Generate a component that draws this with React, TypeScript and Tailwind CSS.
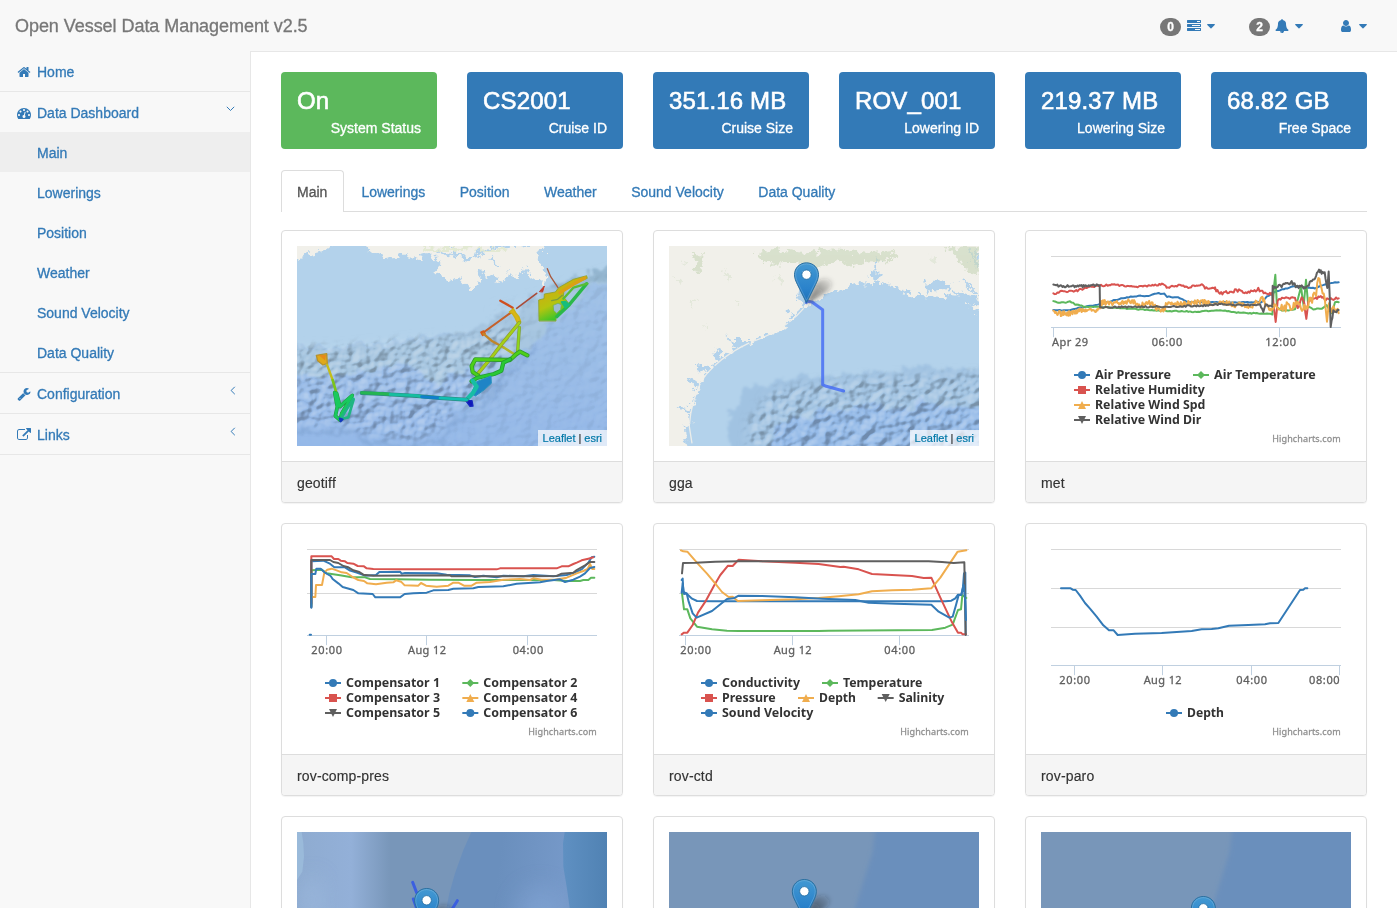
import React from "react";

const BLUE = "#337ab7";
const GREEN = "#5cb85c";
const RED = "#d9534f";
const ORANGE = "#f0ad4e";
const GREY = "#5f5f5f";

/* ---------- icons ---------- */

const ICONS = {
  home: "M1472 992v480q0 26-19 45t-45 19h-384v-384h-256v384h-384q-26 0-45-19t-19-45v-480q0-1 .5-3t.5-3l575-474 575 474q1 2 1 6zm223-69l-62 74q-8 9-21 11h-3q-13 0-21-7l-692-577-692 577q-12 8-24 7-13-2-21-11l-62-74q-8-10-7-23.5t11-21.5l719-599q32-26 76-26t76 26l244 204v-195q0-14 9-23t23-9h192q14 0 23 9t9 23v408l219 182q10 8 11 21.5t-7 23.5z",
  dashboard:
    "M384 1152q0-53-37.5-90.5t-90.5-37.5-90.5 37.5-37.5 90.5 37.5 90.5 90.5 37.5 90.5-37.5 37.5-90.5zm192-448q0-53-37.5-90.5t-90.5-37.5-90.5 37.5-37.5 90.5 37.5 90.5 90.5 37.5 90.5-37.5 37.5-90.5zm428 481l101-382q6-26-7.5-48.5t-38.5-29.5-48 6.5-30 39.5l-101 382q-60 5-107 43.5t-63 98.5q-20 77 20 146t117 89 146-20 89-117q16-60-6-117t-72-91zm660-33q0-53-37.5-90.5t-90.5-37.5-90.5 37.5-37.5 90.5 37.5 90.5 90.5 37.5 90.5-37.5 37.5-90.5zm-640-640q0-53-37.5-90.5t-90.5-37.5-90.5 37.5-37.5 90.5 37.5 90.5 90.5 37.5 90.5-37.5 37.5-90.5zm448 192q0-53-37.5-90.5t-90.5-37.5-90.5 37.5-37.5 90.5 37.5 90.5 90.5 37.5 90.5-37.5 37.5-90.5zm320 448q0 261-141 483-19 29-54 29h-1402q-35 0-54-29-141-221-141-483 0-182 71-348t191-286 286-191 348-71 348 71 286 191 191 286 71 348z",
  wrench:
    "M448 1472q0-26-19-45t-45-19-45 19-19 45 19 45 45 19 45-19 19-45zm644-420l-682 682q-37 37-90 37-52 0-91-37l-106-108q-38-36-38-90 0-53 38-91l681-681q39 98 114.5 173.5t173.5 114.5zm634-435q0 39-23 106-47 134-164.5 217.5t-258.5 83.5q-185 0-316.5-131.5t-131.5-316.5 131.5-316.5 316.5-131.5q58 0 121.5 16.5t107.5 46.5q16 11 16 28t-16 28l-293 169v224l193 107q5-3 79-48.5t135.5-81 70.5-35.5q15 0 23.5 10t8.5 25z",
  external:
    "M1408 928v320q0 119-84.5 203.5t-203.5 84.5h-832q-119 0-203.5-84.5t-84.5-203.5v-832q0-119 84.5-203.5t203.5-84.5h704q14 0 23 9t9 23v64q0 14-9 23t-23 9h-704q-66 0-113 47t-47 113v832q0 66 47 113t113 47h832q66 0 113-47t47-113v-320q0-14 9-23t23-9h64q14 0 23 9t9 23zm384-864v512q0 26-19 45t-45 19-45-19l-176-176-652 652q-10 10-23 10t-23-10l-114-114q-10-10-10-23t10-23l652-652-176-176q-19-19-19-45t19-45 45-19h512q26 0 45 19t19 45z",
  tasks:
    "M1024 1408h640v-128h-640v128zm-384-512h1024v-128h-1024v128zm640-512h384v-128h-384v128zm512 832v256q0 26-19 45t-45 19h-1664q-26 0-45-19t-19-45v-256q0-26 19-45t45-19h1664q26 0 45 19t19 45zm0-512v256q0 26-19 45t-45 19h-1664q-26 0-45-19t-19-45v-256q0-26 19-45t45-19h1664q26 0 45 19t19 45zm0-512v256q0 26-19 45t-45 19h-1664q-26 0-45-19t-19-45v-256q0-26 19-45t45-19h1664q26 0 45 19t19 45z",
  bell: "M912 1696q0-16-16-16-59 0-101.5-42.5t-42.5-101.5q0-16-16-16t-16 16q0 73 51.5 124.5t124.5 51.5q16 0 16-16zm816-288q0 52-38 90t-90 38h-448q0 106-75 181t-181 75-181-75-75-181h-448q-52 0-90-38t-38-90q50-42 91-88t85-119.5 74.5-158.5 50-206 19.5-260q0-152 117-282.5t307-158.5q-8-19-8-39 0-40 28-68t68-28 68 28 28 68q0 20-8 39 190 28 307 158.5t117 282.5q0 139 19.5 260t50 206 74.5 158.5 85 119.5 91 88z",
  user: "M1536 1399q0 109-62.5 187t-150.5 78h-854q-88 0-150.5-78t-62.5-187q0-85 8.5-160.5t31.5-152 58.5-131 94-89 134.5-34.5q131 128 313 128t313-128q76 0 134.5 34.5t94 89 58.5 131 31.5 152 8.5 160.5zm-256-887q0 159-112.5 271.5t-271.5 112.5-271.5-112.5-112.5-271.5 112.5-271.5 271.5-112.5 271.5 112.5 112.5 271.5z",
};

function Icon({ name, className = "" }: { name: keyof typeof ICONS; className?: string }) {
  return (
    <svg viewBox="0 0 1792 1792" className={`h-[14px] w-[14px] shrink-0 fill-current ${className}`}>
      <path d={ICONS[name]} />
    </svg>
  );
}

function Caret() {
  return (
    <svg viewBox="0 0 8 5" className="h-[5px] w-2 shrink-0 fill-current">
      <path d="M.5 0h7q.6.3.2.9L4.4 4.3q-.4.4-.8 0L.3.9Q-.1.3.5 0z" />
    </svg>
  );
}

/* ---------- chart helpers ---------- */

type Pt = [number, number];

function jitter(points: Pt[], amp: number, seed: number, step = 4) {
  let s = seed;
  const rnd = () => {
    s = (s * 16807) % 2147483647;
    return s / 2147483647 - 0.5;
  };
  const out: string[] = [];
  for (let i = 0; i < points.length - 1; i++) {
    const [x0, y0] = points[i];
    const [x1, y1] = points[i + 1];
    const n = Math.max(1, Math.round((x1 - x0) / step));
    for (let k = 0; k < n; k++) {
      const t = k / n;
      const x = x0 + (x1 - x0) * t;
      const y = y0 + (y1 - y0) * t + rnd() * amp * 2;
      out.push(`${x.toFixed(1)},${y.toFixed(1)}`);
    }
  }
  const last = points[points.length - 1];
  out.push(`${last[0]},${last[1]}`);
  return out.join(" ");
}

type Shape = "circle" | "diamond" | "square" | "up" | "down";
type Legend = { x: number; y: number; label: string; w: number; color: string; shape: Shape };
type Axis = { x: number; label: string; w: number; lx: number };

function Marker({ x, y, color, shape }: { x: number; y: number; color: string; shape: Shape }) {
  return (
    <g fill={color} stroke="none">
      <rect x={x - 24} y={y - 3} width={48} height={6} />
      {shape === "circle" && <circle cx={x} cy={y} r={12} />}
      {shape === "diamond" && <path d={`M${x} ${y - 12}l12 12-12 12-12-12z`} />}
      {shape === "square" && <rect x={x - 12} y={y - 12} width={24} height={24} />}
      {shape === "up" && <path d={`M${x} ${y - 12}l12 24h-24z`} />}
      {shape === "down" && <path d={`M${x} ${y + 12}l12-24h-24z`} />}
    </g>
  );
}

function Chart({
  viewBox,
  x0,
  grid,
  axisY,
  axis,
  legend,
  creditY,
  children,
}: {
  viewBox: string;
  x0: number;
  grid: number[];
  axisY: number;
  axis: Axis[];
  legend: Legend[];
  creditY: number;
  children: React.ReactNode;
}) {
  return (
    <svg viewBox={viewBox} className="block h-[200px] w-[310px] font-['Noto_Sans',sans-serif]">
      {grid.map((y) => (
        <rect key={y} x={x0} y={y - 1.5} width={870} height={3} fill="#d8d8d8" />
      ))}
      <rect x={x0} y={axisY - 1.5} width={870} height={3} fill="#c0d0e0" />
      {axis.map((a) => (
        <g key={a.label}>
          <rect x={a.x - 1.5} y={axisY} width={3} height={29} fill="#c0d0e0" />
          <text x={a.lx} y={axisY + 56} textLength={a.w} fontSize={33} fill="#606060" stroke="#606060" strokeWidth={0.9}>
            {a.label}
          </text>
        </g>
      ))}
      <g fill="none" strokeWidth={6} strokeLinejoin="round" strokeLinecap="round">
        {children}
      </g>
      {legend.map((l) => (
        <g key={l.label}>
          <Marker x={l.x} y={l.y} color={l.color} shape={l.shape} />
          <text
            x={l.x + 39}
            y={l.y + 12}
            textLength={l.w + 1}
            lengthAdjust="spacingAndGlyphs"
            fontSize={36.5}
            fontWeight={700}
            fill="#333"
          >
            {l.label}
          </text>
        </g>
      ))}
      <text x={x0 + 664} y={creditY} textLength={205} fontSize={27} fill="#909090" stroke="#909090" strokeWidth={0.9}>
        Highcharts.com
      </text>
    </svg>
  );
}

function MetChart() {
  return (
    <Chart
      viewBox="18 18 930 600"
      x0={48}
      grid={[49.5]}
      axisY={262.5}
      creditY={605}
      axis={[
        { x: 55.5, label: "Apr 29", w: 108, lx: 51 },
        { x: 394.5, label: "06:00", w: 92, lx: 350 },
        { x: 733.5, label: "12:00", w: 92, lx: 691 },
      ]}
      legend={[
        { x: 141, y: 405, label: "Air Pressure", w: 227, color: BLUE, shape: "circle" },
        { x: 498, y: 405, label: "Air Temperature", w: 304, color: GREEN, shape: "diamond" },
        { x: 141, y: 450, label: "Relative Humidity", w: 328, color: RED, shape: "square" },
        { x: 141, y: 495, label: "Relative Wind Spd", w: 330, color: ORANGE, shape: "up" },
        { x: 141, y: 540, label: "Relative Wind Dir", w: 318, color: GREY, shape: "down" },
      ]}
    >
      <polyline
        stroke={BLUE}
        points={jitter([[55, 211], [105, 211], [130, 204], [165, 198], [200, 192], [230, 183], [270, 173], [305, 168], [340, 167], [365, 160], [388, 161], [396, 170], [430, 172], [460, 186], [520, 187], [600, 187], [680, 186], [695, 170], [712, 160], [735, 150], [775, 140], [815, 142], [840, 145], [870, 133], [895, 128], [911, 127]], 1.3, 11, 6)}
      />
      <polyline
        stroke={GREEN}
        points={jitter([[55, 185], [75, 189], [95, 187], [105, 183], [120, 193], [150, 200], [240, 203], [330, 209], [400, 213], [480, 215], [560, 211], [600, 217], [680, 221], [712, 222], [717, 140], [721, 104], [726, 200], [740, 212], [780, 208], [798, 140], [806, 200], [813, 118], [820, 200], [835, 207], [860, 205], [875, 195], [890, 220], [900, 187], [911, 187]], 1.6, 23, 5)}
      />
      <polyline
        stroke={RED}
        points={jitter([[55, 163], [80, 154], [120, 154], [150, 144], [190, 137], [230, 134], [300, 140], [385, 133], [395, 142], [430, 136], [460, 142], [500, 133], [510, 144], [540, 147]], 3, 5, 4)}
      />
      <polyline
        stroke={RED}
        points={jitter([[540, 147], [562, 161], [600, 152], [640, 156], [670, 148], [690, 158], [712, 162], [722, 250], [728, 182], [745, 175], [780, 170], [788, 205], [800, 175], [808, 190], [814, 240], [820, 180], [850, 172], [880, 177], [911, 175]], 5, 15, 4)}
      />
      <polyline
        stroke={ORANGE}
        points={jitter([[55, 220], [100, 221], [135, 211], [195, 211], [199, 188], [240, 189], [285, 182], [320, 196], [345, 188], [365, 205], [385, 212], [395, 192], [460, 190], [500, 186], [540, 194], [560, 184], [600, 194], [650, 197], [687, 175], [695, 200], [712, 205]], 8, 31, 2.5)}
      />
      <polyline
        stroke={ORANGE}
        points={jitter([[712, 207], [740, 201], [770, 199], [798, 200], [820, 190], [840, 170], [850, 125], [866, 155], [876, 240], [882, 190], [888, 215], [895, 200], [911, 220]], 15, 57, 3)}
      />
      <polyline
        stroke={GREY}
        points={jitter([[55, 137], [125, 139], [194, 136]], 3.5, 77, 3) + " 195,202 " + jitter([[196, 203], [300, 200], [400, 200], [500, 197], [560, 192], [620, 196], [675, 194], [685, 215], [692, 195], [712, 200]], 2.4, 79, 4)}
      />
      <polyline
        stroke={GREY}
        points={jitter([[712, 200], [713, 143], [740, 136], [770, 125], [785, 142], [815, 139], [840, 115], [852, 88], [860, 97], [869, 100], [877, 148], [881, 90], [887, 255], [895, 215], [911, 210]], 6, 99, 3)}
      />
    </Chart>
  );
}

function CompChart() {
  return (
    <Chart
      viewBox="21 27 930 600"
      x0={51}
      grid={[58.5, 190.5]}
      axisY={316.5}
      creditY={614}
      axis={[
        { x: 109.5, label: "20:00", w: 92, lx: 64 },
        { x: 409.5, label: "Aug 12", w: 114, lx: 354 },
        { x: 712.5, label: "04:00", w: 92, lx: 668 },
      ]}
      legend={[
        { x: 129, y: 459, label: "Compensator 1", w: 281, color: BLUE, shape: "circle" },
        { x: 541, y: 459, label: "Compensator 2", w: 281, color: GREEN, shape: "diamond" },
        { x: 129, y: 504, label: "Compensator 3", w: 281, color: RED, shape: "square" },
        { x: 541, y: 504, label: "Compensator 4", w: 281, color: ORANGE, shape: "up" },
        { x: 129, y: 549, label: "Compensator 5", w: 281, color: GREY, shape: "down" },
        { x: 541, y: 549, label: "Compensator 6", w: 281, color: BLUE, shape: "circle" },
      ]}
    >
      <path stroke={BLUE} d="M59 314h4" />
      <path
        stroke={BLUE}
        d="M64 230V94L100 92 118 100 133 112 165 112 180 122 200 128 225 137 258 135 268 126 290 126 330 125 335 131 345 129 440 130 470 134 540 136 555 141 580 137 620 142 640 137 700 139 730 135 790 139 830 135 855 127 875 118 895 98 905 82 913 80"
      />
      <path
        stroke={GREEN}
        d="M64 225V121L95 119 110 130 150 136 185 142 225 142 240 147 320 148 420 149 560 150 700 150 790 150 830 153 870 153 880 150 895 150 903 143 913 143"
      />
      <path
        stroke={RED}
        d="M64 220V79H125L132 87 145 87 152 92 165 94 172 99 190 101 203 108 222 109 230 115 250 117 330 118H620L630 115H800L815 109 835 109 850 102 862 97 875 91 895 86 910 82"
      />
      <path
        stroke={ORANGE}
        d="M66 201H76L78 165H96L103 128 112 119 125 116 140 121 155 127 170 129 188 141 205 150 222 153 232 160 258 163 290 158 310 157 318 151 333 155 344 166 385 167 393 159 408 167 440 170 475 167 490 158 505 158 522 167 545 167 560 158 600 156 640 149 690 147 720 150 730 145 755 149 795 149 830 143 860 130 880 123 893 117 900 102 907 117 913 117"
      />
      <path
        stroke={GREY}
        d="M64 232V90H120L130 96 145 99 160 108 175 112 190 121 208 126 220 134 250 137 480 136 485 139 640 139 720 139 800 138 815 131 850 128 860 120 885 106 900 96 913 96"
      />
      <path
        stroke={BLUE}
        d="M64 233V132H76L79 116H92L105 128 122 138 128 147 145 160 158 171 190 180 205 190 248 192 256 202H330L344 192 370 190 410 188 430 181 475 180 490 176 550 175 565 171 640 169 680 161 750 157 770 153 810 148 825 156 850 149 870 140 885 130 900 114 913 111"
      />
    </Chart>
  );
}

function CtdChart() {
  return (
    <Chart
      viewBox="21 27 930 600"
      x0={51}
      grid={[58.5, 190.5]}
      axisY={316.5}
      creditY={614}
      axis={[
        { x: 70.5, label: "20:00", w: 92, lx: 55 },
        { x: 391.5, label: "Aug 12", w: 114, lx: 335 },
        { x: 712.5, label: "04:00", w: 92, lx: 667 },
      ]}
      legend={[
        { x: 141, y: 459, label: "Conductivity", w: 233, color: BLUE, shape: "circle" },
        { x: 504, y: 459, label: "Temperature", w: 237, color: GREEN, shape: "diamond" },
        { x: 141, y: 504, label: "Pressure", w: 160, color: RED, shape: "square" },
        { x: 432, y: 504, label: "Depth", w: 110, color: ORANGE, shape: "up" },
        { x: 671, y: 504, label: "Salinity", w: 136, color: GREY, shape: "down" },
        { x: 141, y: 549, label: "Sound Velocity", w: 273, color: BLUE, shape: "circle" },
      ]}
    >
      <path
        stroke={BLUE}
        d="M59 150L62 146 64 185 75 192 90 206 105 213 150 214H850L868 212 880 205 888 194 898 194 903 170 906 130 910 128 911 312"
      />
      <path
        stroke={GREEN}
        d="M60 190L66 238 76 238 85 265 105 290 150 298 195 302 230 303H470L500 302 810 300 850 293 872 284 888 240 897 238 901 195 913 204"
      />
      <path
        stroke={RED}
        d="M59 313L66 308 76 308 92 285 108 248 130 215 156 167 175 135 198 107 212 108 230 89 300 94 400 98 470 102 535 111 545 110 590 118 630 132 690 135 750 138 785 144 808 143 835 203 870 277 888 308 897 308 902 313 912 313"
      />
      <path
        stroke={ORANGE}
        d="M57 61L64 64 76 65 110 104 135 131 160 161 180 186 200 201 212 200 227 213 300 211 400 208 470 204 530 199 590 193 630 184 690 181 750 179 808 175 835 143 865 98 887 65 900 63 913 61"
      />
      <path stroke={GREY} d="M60 130L63 99 100 98 160 95 230 94H800L840 96 875 99 907 97 911 315" />
      <path
        stroke={BLUE}
        d="M59 188L62 160 66 192 74 190 80 215 92 250 104 263 150 243 195 207 215 205 230 197 300 198 400 202 480 206 580 210 620 218 700 221 808 224 830 245 862 263 872 260 882 225 890 195 898 195 905 165 909 205 912 270"
      />
    </Chart>
  );
}

function ParoChart() {
  return (
    <Chart
      viewBox="18 27 930 600"
      x0={48}
      grid={[58.5, 175.5, 292.5]}
      axisY={406.5}
      creditY={614}
      axis={[
        { x: 118.5, label: "20:00", w: 92, lx: 73 },
        { x: 382.5, label: "Aug 12", w: 114, lx: 326 },
        { x: 649.5, label: "04:00", w: 92, lx: 604 },
        { x: 913.5, label: "08:00", w: 92, lx: 822 },
      ]}
      legend={[{ x: 417, y: 549, label: "Depth", w: 110, color: BLUE, shape: "circle" }]}
    >
      <path
        stroke={BLUE}
        d="M78 175H107L113 179 122 180 135 197 150 219 165 236 185 260 205 286 222 301H236L248 315 300 311 380 309 470 303 500 298 530 297 550 295 582 287 640 285 690 283 705 280 730 279 795 180 805 179 810 175 817 175"
      />
    </Chart>
  );
}

/* ---------- maps ---------- */

function Pin({ x, y, id }: { x: number; y: number; id: string }) {
  return (
    <g transform={`translate(${x} ${y}) scale(3)`}>
      <defs>
        <linearGradient id={`${id}-fill`} x1="0" y1="0" x2="0" y2="1">
          <stop offset="0" stopColor="#4399d2" />
          <stop offset="0.65" stopColor="#2a82cb" />
          <stop offset="1" stopColor="#1d6fb6" />
        </linearGradient>
        <linearGradient id={`${id}-shade`} x1="0" y1="1" x2="1" y2="0">
          <stop offset="0" stopColor="#222" stopOpacity="0.6" />
          <stop offset="0.5" stopColor="#222" stopOpacity="0.4" />
          <stop offset="1" stopColor="#222" stopOpacity="0.04" />
        </linearGradient>
        <filter id={`${id}-blur`} x="-50%" y="-50%" width="200%" height="200%">
          <feGaussianBlur stdDeviation="2" />
        </filter>
      </defs>
      <path d="M0 40L9 21Q15 14 24 17 29 22 21 29L2 41z" fill={`url(#${id}-shade)`} filter={`url(#${id}-blur)`} />
      <path
        d="M0 .5C-6.9.5-12 5.7-12 12.4-12 16-10.6 19-9 22.3L0 40.5 9 22.3C10.6 19 12 16 12 12.4 12 5.7 6.9.5 0 .5z"
        fill={`url(#${id}-fill)`}
        stroke="#2a6f9f"
        strokeWidth="1"
      />
      <path d="M0 1.6C-6.3 1.6-10.9 6.4-10.9 12.4-10.9 15.8-9.6 18.6-8 21.8L0 38 8 21.8C9.6 18.6 10.9 15.8 10.9 12.4 10.9 6.4 6.3 1.6 0 1.6z" fill="none" stroke="#fff" strokeOpacity="0.17" />
      <circle cy="12.3" r="4.7" fill="#fff" stroke="#2870a5" strokeWidth="0.9" />
    </g>
  );
}

function MapFilters({ id, seed }: { id: string; seed: number }) {
  return (
    <>
      <filter id={`${id}-relief`} x="0" y="0" width="100%" height="100%" colorInterpolationFilters="sRGB">
        <feTurbulence type="fractalNoise" baseFrequency="0.028 0.032" numOctaves={2} seed={seed} result="n" />
        <feColorMatrix in="n" type="matrix" values="0 0 0 0 0 0 0 0 0 0 0 0 0 0 0 1 0 0 0 0" />
        <feDiffuseLighting surfaceScale={13} diffuseConstant={1.12} lightingColor="#fff">
          <feDistantLight azimuth={225} elevation={30} />
        </feDiffuseLighting>
      </filter>
      <filter id={`${id}-coast`} x="-5%" y="-5%" width="110%" height="110%">
        <feTurbulence type="fractalNoise" baseFrequency="0.05" numOctaves={4} seed={seed + 2} result="n" />
        <feDisplacementMap in="SourceGraphic" in2="n" scale={42} xChannelSelector="R" yChannelSelector="G" />
      </filter>
      <filter id={`${id}-rough`} x="-5%" y="-5%" width="110%" height="110%">
        <feTurbulence type="fractalNoise" baseFrequency="0.03" numOctaves={3} seed={seed + 4} result="n" />
        <feDisplacementMap in="SourceGraphic" in2="n" scale={50} xChannelSelector="R" yChannelSelector="G" />
        <feGaussianBlur stdDeviation="3" />
      </filter>
      <filter id={`${id}-soft`} x="-20%" y="-20%" width="140%" height="140%">
        <feGaussianBlur stdDeviation="12" />
      </filter>
    </>
  );
}

function MapFrame({ credit = true, children }: { credit?: boolean; children: React.ReactNode }) {
  return (
    <div className="relative h-[200px] w-[310px] overflow-hidden">
      {children}
      {credit && (
        <div className="absolute right-0 bottom-0 flex h-4 items-center gap-[3px] bg-white/70 pr-[5px] pl-[5px] text-[11px] tracking-[-0.02px] text-[#333] [-webkit-text-stroke:0.2px]">
          <a className="text-[#0078a8]">Leaflet</a>
          <span>|</span>
          <a className="text-[#0078a8]">esri</a>
        </div>
      )}
    </div>
  );
}

function GeotiffMap() {
  return (
    <MapFrame>
      <svg viewBox="21 18 930 600" className="block h-[200px] w-[310px]">
        <defs>
          <MapFilters id="geo" seed={4} />
          <linearGradient id="geo-patch" x1="0.3" y1="0" x2="0.8" y2="1">
            <stop offset="0" stopColor="#dfa010" />
            <stop offset="0.5" stopColor="#b4c410" />
            <stop offset="0.8" stopColor="#35c52a" />
            <stop offset="1" stopColor="#14b97a" />
          </linearGradient>
          <mask id="geo-mask">
            <path
              d="M0 320L150 320 300 305 470 290 560 285 620 260 680 280 640 380 570 480 500 510 450 570 380 600 240 590 180 560 60 560 0 550z"
              fill="#fff"
              filter="url(#geo-soft)"
            />
            <path
              d="M620 260L600 200 650 180 760 160 840 120 980 80V640H240L460 600 560 490 640 380z"
              fill="#fff"
              opacity="0.18"
              filter="url(#geo-soft)"
            />
          </mask>
          <linearGradient id="geo-deep" x1="0" y1="0" x2="0" y2="1">
            <stop offset="0" stopColor="#9fc1e6" />
            <stop offset="1" stopColor="#93b7e8" />
          </linearGradient>
        </defs>
        <rect width="980" height="640" fill="#b3d2eb" />
        <path
          d="M-40 325L150 323 300 305 470 290 560 273 620 240 700 215 760 155 850 130 1020 85V680H-40z"
          fill="url(#geo-deep)"
          filter="url(#geo-rough)"
        />
        <path
          d="M-40 325L150 323 300 305 470 290 540 273 610 235 690 205 760 145 850 117 1020 70 1020 120 900 135 860 190 760 280 700 330 560 370 440 430 350 370 200 400 100 410 -40 400z"
          fill="#a5c5e0"
          filter="url(#geo-rough)"
        />
        <path
          d="M790 135L850 112 920 95 1020 60 1020 100 920 125 850 138 800 160z"
          fill="#8fb2cc"
          opacity="0.8"
          filter="url(#geo-rough)"
        />
        <path
          d="M-20 568L120 580 180 575 240 610 370 625 460 600 500 540 570 500 660 400 740 320"
          fill="none"
          stroke="#84a9d8"
          strokeWidth="12"
          opacity="0.7"
          filter="url(#geo-rough)"
        />
        <g mask="url(#geo-mask)" className="mix-blend-hard-light opacity-25">
          <rect x="0" y="0" width="980" height="640" filter="url(#geo-relief)" />
        </g>
        <path
          d="M0 -20H165L100 32 30 50 0 60zM200 -20H380L400 30 390 62 340 45 290 55 240 34zM380 -20H770L762 30 735 45 755 70 770 100 765 135 725 110 705 85 690 115 655 100 640 125 600 110 572 90 565 135 535 145 505 112 480 125 450 110 430 95 455 75 420 40 400 40z"
          fill="#f1f0ea"
          filter="url(#geo-coast)"
        />
        <path d="M440 30Q520 70 580 35T720 20M600 60l30 20M480 18l20 30 40 10" fill="none" stroke="#b3d2eb" strokeWidth="9" filter="url(#geo-coast)" />
        <path d="M400 18q60 20 150 0M560 30q40 10 90-4" fill="none" stroke="#e2e9d2" strokeWidth="10" filter="url(#geo-coast)" />

        <g fill="none" strokeLinecap="round" strokeLinejoin="round">
          <path d="M772 86L782 110 804 143" stroke="#a8583c" strokeWidth="4" />
          <path d="M740 160L680 205" stroke="#a84c3a" strokeWidth="5" />
          <path d="M749 154l14-16-5 17z" fill="#c03a2a" stroke="#c03a2a" strokeWidth="3" />
          <path d="M631 182L668 203" stroke="#cf4f20" strokeWidth="7" />
          <path d="M664 217L578 279" stroke="#c5602a" strokeWidth="6" />
          <path d="M573 277l8-4 4 8-7 5z" fill="#d75a18" stroke="#d75a18" strokeWidth="5" />
          <path d="M580 281L607 304 640 322" stroke="#c1862a" strokeWidth="7" />
          <path d="M640 322L672 342" stroke="#b3b428" strokeWidth="7" />
          <path d="M658 216l12-10 7 12 10 13 5 14-10 4-7-16-8-12z" fill="#dcb614" stroke="#c9b216" strokeWidth="4" />
          <path d="M688 248L632 316 600 358 560 405" stroke="#8f9a35" strokeWidth="11" />
          <path d="M688 248L632 316 600 358 560 405" stroke="#a5d016" strokeWidth="7" />
          <path d="M688 262L683 335" stroke="#7f9f35" strokeWidth="10" />
          <path d="M688 262L683 335" stroke="#8fd51c" strokeWidth="6" />
          <path d="M712 346L690 335 678 343 660 360 556 358 545 378 548 396 566 408" stroke="#2f9a30" strokeWidth="13" />
          <path d="M712 346L690 335 678 343 660 360 556 358 545 378 548 396 566 408" stroke="#4dd018" strokeWidth="8" />
          <path d="M660 358L640 368 634 392 612 402 560 414 545 424" stroke="#239b34" strokeWidth="13" />
          <path d="M660 358L640 368 634 392 612 402 560 414 545 424" stroke="#29c934" strokeWidth="8" />
          <path d="M560 425L603 408 604 430 582 450 556 468 545 462z" fill="#1f84c6" stroke="#2793bd" strokeWidth="3" />
          <path d="M548 422L560 440 548 460 532 476" stroke="#18bda5" strokeWidth="13" />
          <path d="M527 482L546 482 549 498 540 499z" fill="#1018b8" stroke="#1527c0" strokeWidth="4" />
          <path d="M215 459L280 462 380 468 450 474 530 479" stroke="#2d8a80" strokeWidth="12" />
          <path d="M215 458L280 461 300 463" stroke="#25b552" strokeWidth="9" />
          <path d="M300 463L380 467 395 470" stroke="#16bea0" strokeWidth="8" />
          <path d="M395 470L450 474" stroke="#0f7fcb" strokeWidth="9" />
          <path d="M450 474L530 479" stroke="#11bfb2" strokeWidth="8" />
          <path d="M79 346L110 341 112 370 99 375 83 362z" fill="#dfa91a" stroke="#b59230" strokeWidth="4" />
          <path d="M85 345h23l-3 16z" fill="#e58a1a" stroke="none" />
          <path d="M111 374L128 420" stroke="#c4bd1b" strokeWidth="7" />
          <path d="M128 420L138 455" stroke="#7cc41b" strokeWidth="8" />
          <path d="M134 458L142 500 136 528 150 540 155 520 187 466 160 490 150 500 140 460" stroke="#23963c" strokeWidth="11" />
          <path d="M134 458L142 500 136 528 150 540 155 520 187 466 160 490 150 500 140 460" stroke="#19c95e" strokeWidth="8" />
          <path d="M191 478L175 532 152 537 190 476" stroke="#1fb583" strokeWidth="8" />
          <path d="M149 535l9 3-6 6z" stroke="#1238bd" strokeWidth="6" />
          <path
            d="M747 242L746 180 762 176 763 162 796 156 806 143 850 118 890 107 892 115 850 133 822 150 820 170 838 192 798 232 798 242z"
            fill="url(#geo-patch)"
            stroke="#8ea22a"
            strokeWidth="2.5"
          />
          <path d="M800 230L838 194 890 131" stroke="#2bb84a" strokeWidth="10" />
          <path d="M820 176L850 143 892 131" stroke="#58bd34" strokeWidth="7" />
          <path d="M810 158L850 133 884 114" stroke="#dca014" strokeWidth="10" />
          <path d="M790 196l14-6 10 4-2 14-12 12-8-8z" fill="#9bbcd3" stroke="#6fae5a" strokeWidth="2" />
          <path d="M785 182l18-4 14-12" stroke="#7a9c40" strokeWidth="4" />
          <path d="M814 186l12-2 12 10-12 10z" fill="#17bd7e" stroke="#17bd7e" strokeWidth="4" />
        </g>
      </svg>
    </MapFrame>
  );
}

function GgaMap() {
  return (
    <MapFrame>
      <svg viewBox="21 18 930 600" className="block h-[200px] w-[310px]">
        <defs>
          <MapFilters id="gga" seed={9} />
          <mask id="gga-mask">
            <path
              d="M205 640L195 560 215 500 260 450 340 420 440 408 540 405 700 392 870 382 1020 390V680H205z"
              fill="#fff"
              filter="url(#gga-rough)"
            />
          </mask>
          <mask id="gga-relief-mask">
            <path d="M250 660L260 540 330 450 480 425 640 410 860 400 1020 400V660H250z" fill="#fff" filter="url(#gga-soft)" />
          </mask>
        </defs>
        <rect width="980" height="640" fill="#b3d2eb" />
        <g mask="url(#gga-mask)">
          <rect width="980" height="640" fill="#a1c3e2" />
          <path
            d="M330 660L340 560 390 530 450 540 480 500 560 520 600 490 680 510 740 500 780 480 860 500 1020 510V680z"
            fill="#94bae8"
            filter="url(#gga-rough)"
          />
        </g>
        <g mask="url(#gga-relief-mask)" className="mix-blend-hard-light opacity-25">
          <rect x="0" y="0" width="980" height="640" filter="url(#gga-relief)" />
        </g>
        <path
          d="M-30 -30H1020V225L940 215 915 185 880 165 830 170 770 168 725 155 690 135 640 125 570 138 500 160 460 185 430 205 390 240 350 275 290 295 240 320 190 345 140 390 105 450 88 510 82 570 85 650H-30z"
          fill="#f1f0ea"
          filter="url(#gga-coast)"
        />
        <g filter="url(#gga-coast)" fill="#b3d2eb">
          <path d="M410 140l18 10 6 35-8 20-20-32zM190 285l22 15 50 0-5 15-40 12zM155 325l25 15 5 22-24-10zM110 375l42 4-10 20-30-8zM70 415l40 10-10 22zM45 500l40 5-4 20zM65 550l20 10-2 60-14-20zM380 210l20 12-18 16zM625 98l35 6-4 20-26-4zM790 130l40-10 45 10-16 20-66 8zM860 150l40 10 80 30v10l-70-10zM920 30l12 10 18 30-12 10z" />
        </g>
        <path d="M640 100V70L660 45M935 30l25 40M900 120l50 50" fill="none" stroke="#b3d2eb" strokeWidth="6" filter="url(#gga-coast)" />
        <path d="M425 205Q370 270 270 305 170 350 120 420 85 490 82 560L90 610" fill="none" stroke="#f1f0ea" strokeWidth="4" opacity="0.9" strokeDasharray="60 5" />
        <g fill="#cbd9bd" opacity="0.65" filter="url(#gga-coast)">
          <path d="M280 40L340 30 420 38 520 28 620 36 700 30 690 60 640 62 570 78 520 66 460 80 390 72 330 74 300 60zM860 20H950V110L920 95 900 60 870 50zM95 40l30 0-4 40-16 20z" />
          <path d="M40 110l20 4-10 22zM180 90l28 18-10 20zM90 170l14 10-18 14zM340 110l26 10-14 14zM120 250l16 4-8 18zM800 40l26 20-16 8zM60 60l20 10-8 6zM220 180l12 10-14 6z" opacity="0.55" />
        </g>
        <path
          d="M433 188L434 184 450 186 482 209V434L490 438 545 453"
          fill="none"
          stroke="#4169f5"
          strokeOpacity="0.8"
          strokeWidth="9"
          strokeLinejoin="round"
          strokeLinecap="round"
        />
        <Pin x={433.5} y={67} id="gga-pin" />
      </svg>
    </MapFrame>
  );
}

function SlopeMap() {
  return (
    <MapFrame credit={false}>
      <svg viewBox="81 96 930 600" className="block h-[200px] w-[310px]">
        <defs>
          <linearGradient id="slope-a" x1="0" y1="0" x2="1" y2="0">
            <stop offset="0" stopColor="#8eabd0" />
            <stop offset="0.3" stopColor="#93b0d8" />
            <stop offset="0.52" stopColor="#7896b9" />
            <stop offset="1" stopColor="#7896b9" />
          </linearGradient>
          <linearGradient id="slope-b" x1="0" y1="0" x2="1" y2="0.15">
            <stop offset="0" stopColor="#6a8fbd" />
            <stop offset="0.35" stopColor="#6a8fbd" />
            <stop offset="0.75" stopColor="#7699c9" />
            <stop offset="1" stopColor="#7396c4" />
          </linearGradient>
          <linearGradient id="slope-c" x1="0" y1="0" x2="1" y2="0">
            <stop offset="0" stopColor="#5f90c2" />
            <stop offset="1" stopColor="#4f81b2" />
          </linearGradient>
          <filter id="slope-blur" x="-80%" y="-80%" width="260%" height="260%">
            <feGaussianBlur stdDeviation="34" />
          </filter>
        </defs>
        <rect x="81" y="96" width="540" height="600" fill="url(#slope-a)" />
        <ellipse cx="125" cy="300" rx="30" ry="70" fill="#a3bfe3" opacity="0.6" filter="url(#slope-blur)" />
        <path d="M604 96L580 150 555 220 538 280 528 330 520 700H1020V96z" fill="url(#slope-b)" />
        <ellipse cx="810" cy="340" rx="70" ry="80" fill="#86a8d8" opacity="0.5" filter="url(#slope-blur)" />
        <path d="M884 96L879 130 880 200 890 260 900 330 910 700H1020V96z" fill="url(#slope-c)" />
        <path d="M81 96H95L100 130 102 170 97 215 81 240z" fill="#9abada" />
        <path d="M428 247L440 278M430 297L440 325M562 302L546 328" fill="none" stroke="#3b5fe0" strokeWidth="9" strokeLinecap="round" />
        <Pin x={470} y={264} id="slope-pin" />
      </svg>
    </MapFrame>
  );
}

function FlatMap({ id, edge, pinX, pinY }: { id: string; edge: number; pinX: number; pinY: number }) {
  return (
    <MapFrame credit={false}>
      <svg viewBox="0 0 930 600" className="block h-[200px] w-[310px]">
        <defs>
          <filter id={`${id}-edge`} x="-20%" y="-20%" width="140%" height="140%">
            <feGaussianBlur stdDeviation="6" />
          </filter>
        </defs>
        <rect width="930" height="600" fill="#7896b9" />
        <path d={`M${edge} -60L${edge - 14} 60 ${edge - 42} 150 ${edge - 70} 240 ${edge - 110} 660H1000V-60z`} fill="#6a8fbc" filter={`url(#${id}-edge)`} />
        <Pin x={pinX} y={pinY} id={id} />
      </svg>
    </MapFrame>
  );
}

/* ---------- page ---------- */

const TILES = [
  { value: "On", label: "System Status", color: "bg-[#5cb85c]" },
  { value: "CS2001", label: "Cruise ID", color: "bg-[#337ab7]" },
  { value: "351.16 MB", label: "Cruise Size", color: "bg-[#337ab7]" },
  { value: "ROV_001", label: "Lowering ID", color: "bg-[#337ab7]" },
  { value: "219.37 MB", label: "Lowering Size", color: "bg-[#337ab7]" },
  { value: "68.82 GB", label: "Free Space", color: "bg-[#337ab7]" },
];

const SECTIONS = ["Main", "Lowerings", "Position", "Weather", "Sound Velocity", "Data Quality"];

function Card({ title, children }: { title?: string; children: React.ReactNode }) {
  return (
    <div className="flex h-[273px] flex-col overflow-hidden rounded border border-[#ddd] bg-white shadow-[0_1px_1px_rgba(0,0,0,0.05)]">
      <div className="h-[230px] p-[15px]">{children}</div>
      <div className="flex flex-1 items-center border-t border-[#ddd] bg-[#f5f5f5] px-[15px] pt-px tracking-[0.15px] text-[#333] [-webkit-text-stroke:0.15px]">
        {title}
      </div>
    </div>
  );
}

function NavItem({ icon, label, chevron }: { icon: keyof typeof ICONS; label: string; chevron?: "down" | "left" }) {
  return (
    <a className="flex h-10 items-center px-[17px] pt-px">
      <Icon name={icon} />
      <span className="ml-[6px] flex-1">{label}</span>
      {chevron === "down" && (
        <svg viewBox="0 0 9 6" className="-mr-[2px] mb-[7px] h-[6px] w-[9px] fill-none stroke-current">
          <path d="M.8.8l3.7 3.7L8.2.8" />
        </svg>
      )}
      {chevron === "left" && (
        <svg viewBox="0 0 6 9" className="-mr-[3px] mb-[7px] h-[9px] w-[6px] fill-none stroke-current">
          <path d="M4.8.8L1.1 4.5l3.7 3.7" />
        </svg>
      )}
    </a>
  );
}

function Badge({ children }: { children: React.ReactNode }) {
  return (
    <span className="flex h-[18px] w-[21px] items-center justify-center rounded-[10px] bg-[#777] text-xs font-bold text-white">
      {children}
    </span>
  );
}

export default function App() {
  return (
    <div className="h-[908px] w-[1397px] overflow-hidden bg-[#f8f8f8] font-['Liberation_Sans',Arial,sans-serif] text-sm leading-5 text-[#337ab7] [-webkit-text-stroke:0.3px]">
      <header className="flex h-[51px] items-center justify-between pr-[30px] pl-[15px]">
        <h1 className="pt-px text-lg tracking-[-0.05px] text-[#777]">Open Vessel Data Management v2.5</h1>
        <div className="flex items-center pt-[2px]">
          <Badge>0</Badge>
          <Icon name="tasks" className="mb-px ml-[6px]" />
          <span className="mr-[34px] ml-[6px]">
            <Caret />
          </span>
          <Badge>2</Badge>
          <Icon name="bell" className="mb-px ml-[5px]" />
          <span className="mr-[36px] ml-[6px]">
            <Caret />
          </span>
          <Icon name="user" className="mb-px" />
          <span className="ml-[6px]">
            <Caret />
          </span>
        </div>
      </header>
      <div className="flex h-[857px]">
        <nav className="w-[250px] shrink-0">
          <div className="border-b border-[#e7e7e7]">
            <NavItem icon="home" label="Home" />
          </div>
          <div className="border-b border-[#e7e7e7]">
            <NavItem icon="dashboard" label="Data Dashboard" chevron="down" />
            {SECTIONS.map((s, i) => (
              <a key={s} className={`flex h-10 items-center pt-px pl-[37px] ${i === 0 ? "bg-[#eee]" : ""}`}>
                {s}
              </a>
            ))}
          </div>
          <div className="border-b border-[#e7e7e7]">
            <NavItem icon="wrench" label="Configuration" chevron="left" />
          </div>
          <div className="border-b border-[#e7e7e7]">
            <NavItem icon="external" label="Links" chevron="left" />
          </div>
        </nav>
        <main className="flex-1 overflow-hidden border-t border-l border-[#e7e7e7] bg-white px-[30px] pt-5">
          <div className="grid grid-cols-6 gap-[30px]">
            {TILES.map((t) => (
              <div key={t.label} className={`flex h-[77px] flex-col rounded px-4 pt-4 text-white ${t.color}`}>
                <div className="text-2xl leading-[26px] tracking-[0.15px] whitespace-nowrap [-webkit-text-stroke:0.6px]">{t.value}</div>
                <div className="pt-1 text-right">{t.label}</div>
              </div>
            ))}
          </div>
          <div className="mt-[21px] flex h-[42px] gap-[2px] border-b border-[#ddd]">
            {SECTIONS.map((s, i) => (
              <a
                key={s}
                className={
                  i === 0
                    ? "-mb-px h-[42px] w-[63px] rounded-t border border-b-0 border-[#ddd] bg-white pt-[11px] pl-[15px] text-[#555]"
                    : "pt-3 pr-[17.1px] pl-[15.4px]"
                }
              >
                {s}
              </a>
            ))}
          </div>
          <div className="mt-[18px] grid grid-cols-3 gap-x-[30px] gap-y-5">
            <Card title="geotiff">
              <GeotiffMap />
            </Card>
            <Card title="gga">
              <GgaMap />
            </Card>
            <Card title="met">
              <MetChart />
            </Card>
            <Card title="rov-comp-pres">
              <CompChart />
            </Card>
            <Card title="rov-ctd">
              <CtdChart />
            </Card>
            <Card title="rov-paro">
              <ParoChart />
            </Card>
            <Card>
              <SlopeMap />
            </Card>
            <Card>
              <FlatMap id="flat-a" edge={625} pinX={406} pinY={141} />
            </Card>
            <Card>
              <FlatMap id="flat-b" edge={580} pinX={487} pinY={192} />
            </Card>
          </div>
        </main>
      </div>
    </div>
  );
}
